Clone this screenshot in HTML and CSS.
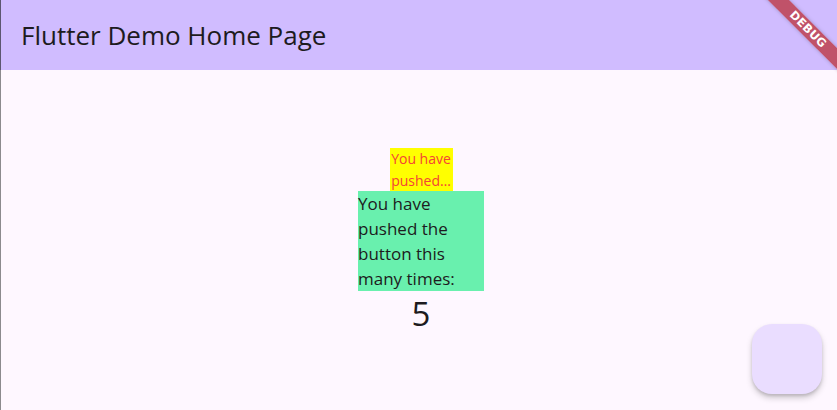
FILE: index.html
```html
<!DOCTYPE html>
<html>
<head>
<meta charset="utf-8">
<link rel="stylesheet" href="styles.css">
</head>
<body>
<div class="app">
  <header class="appbar"><h1 class="title">Flutter Demo Home Page</h1></header>
  <main class="content">
    <div class="column">
      <div class="clip"><span class="line">You have</span><span class="line">pushed…</span></div>
      <div class="green">You have pushed the button this many times:</div>
      <div class="count">5</div>
    </div>
  </main>
  <button class="fab" aria-label="Increment"></button>
  <div class="banner">DEBUG</div>
</div>
</body>
</html>
```
FILE: styles.css
```css
* { box-sizing: border-box; }
html, body { margin: 0; padding: 0; }
body {
  width: 837px;
  height: 410px;
  overflow: hidden;
  background: #fef7ff;
  font-family: "Open Sans", "Noto Sans", sans-serif;
  color: #1d1b20;
}
.app {
  position: relative;
  width: 837px;
  height: 410px;
  display: flex;
  flex-direction: column;
  overflow: hidden;
}
.appbar {
  height: 70px;
  flex: none;
  background: #d0bcff;
  border-left: 1px solid #5c5670;
  display: flex;
  align-items: center;
  padding-left: 20px;
}
.title {
  margin: 0;
  font-weight: 400;
  font-size: 26px;
  line-height: 34px;
  color: #1d1b20;
}
.content {
  flex: 1;
  border-left: 1px solid #8c8a8e;
  display: flex;
  align-items: center;
  justify-content: center;
  padding-left: 4px;
  padding-top: 4px;
}
.column {
  display: flex;
  flex-direction: column;
  align-items: center;
}
.clip {
  width: 63px;
  background: #ffff00;
  color: #f44336;
  font-size: 14px;
  line-height: 21.5px;
  display: flex;
  flex-direction: column;
  align-items: center;
  white-space: nowrap;
}
.green {
  width: 126px;
  background: #69f0ae;
  color: #1d1b20;
  font-size: 17px;
  line-height: 25px;
}
.count {
  font-size: 33px;
  line-height: 45px;
  color: #1d1b20;
}
.fab {
  position: absolute;
  right: 15px;
  bottom: 16px;
  width: 70px;
  height: 70px;
  border: none;
  border-radius: 20px;
  background: #eaddff;
  box-shadow: 0 4px 6px rgba(0,0,0,0.18), 0 2px 3px rgba(0,0,0,0.12);
  padding: 0;
}
.banner {
  position: absolute;
  left: 747px;
  top: 22px;
  width: 122px;
  height: 15px;
  transform: rotate(45deg);
  background: rgba(183, 28, 28, 0.66);
  color: #fff;
  font-family: "DejaVu Sans", sans-serif;
  font-weight: 800;
  font-size: 11.5px;
  line-height: 15px;
  text-align: center;
  letter-spacing: 0.3px;
  box-shadow: 0 0 4px rgba(0,0,0,0.25);
}
```
